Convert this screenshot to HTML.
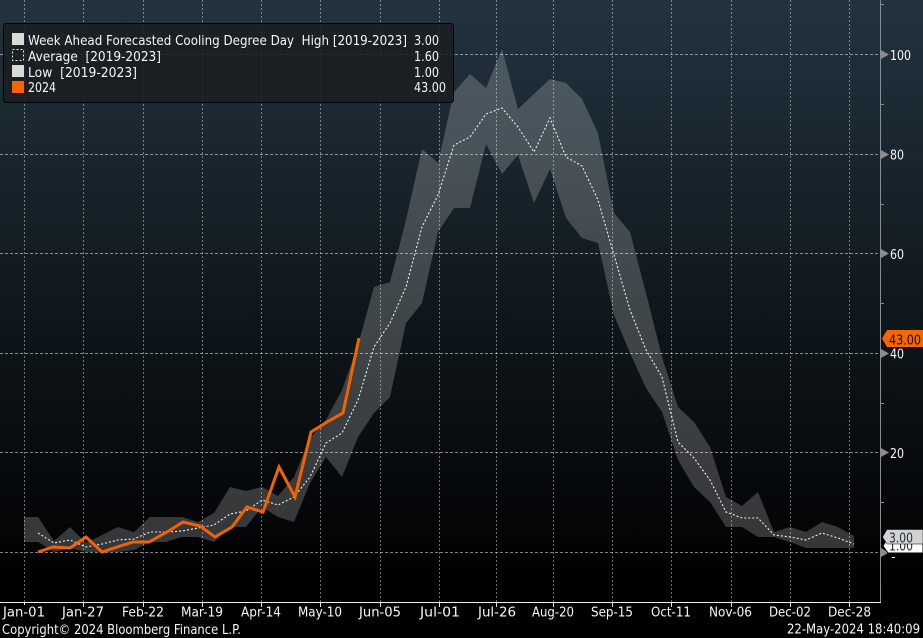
<!DOCTYPE html>
<html>
<head>
<meta charset="utf-8">
<style>
html,body{margin:0;padding:0;background:#000;width:923px;height:638px;overflow:hidden}
svg{display:block}
text{font-family:"DejaVu Sans","Liberation Sans",sans-serif;font-size:13.5px;fill:#f4f6fa;white-space:pre}
.g{stroke:#fff;stroke-opacity:.42;stroke-width:1;stroke-dasharray:2 2;fill:none;shape-rendering:crispEdges}
.h{stroke:#fff;stroke-opacity:.5;stroke-width:1;stroke-dasharray:3 2;fill:none;shape-rendering:crispEdges}
</style>
</head>
<body>
<svg width="923" height="638" viewBox="0 0 923 638" xmlns="http://www.w3.org/2000/svg">
<defs>
<linearGradient id="bg" x1="0" y1="0" x2="0" y2="1">
<stop offset="0" stop-color="#22333f"/>
<stop offset=".25" stop-color="#19262f"/>
<stop offset=".5" stop-color="#10181d"/>
<stop offset=".75" stop-color="#080c0f"/>
<stop offset=".95" stop-color="#010102"/>
<stop offset="1" stop-color="#000"/>
</linearGradient>
</defs>
<rect width="923" height="638" fill="#000"/>
<rect x="0" y="0" width="923" height="602" fill="url(#bg)"/>

<!-- band -->
<polygon fill="#fff" fill-opacity=".205" points="24,517 38,517 54,541 70,527 86,543 102,535 118,527 134,532 150,517 166,517 182,517 198,522 214,513 230,487 246,491 262,487 278,496 294,477 310,438 326,420 342,390 358,345 374,287 390,282 406,220 422,149 438,163 454,92 470,74 486,88 502,49 518,109 534,94 550,79 566,83 582,99 598,133 614,213 630,232 646,293 662,357 678,407 694,422 710,447 726,497 742,506 758,492 774,532 790,527 806,532 822,522 838,527 854,536 854,548 838,548 822,548 806,548 790,542 774,537 758,537 742,527 726,527 710,502 694,487 678,460 662,412 646,388 630,353 614,315 598,243 582,238 566,218 550,169 534,203 518,155 502,174 486,144 470,208 454,208 438,232 422,303 406,323 390,397 374,413 358,437 342,477 326,457 310,483 294,522 278,517 262,507 246,527 230,527 214,542 198,537 182,537 166,542 150,542 134,550 118,552 102,552 86,552 70,548 54,552 38,542 24,542"/>

<!-- grid -->
<g class="h">
<path d="M0 54.5H880"/><path d="M0 154.5H880"/><path d="M0 253.5H880"/><path d="M0 353.5H880"/><path d="M0 452.5H880"/><path d="M0 552.5H880"/>
</g>
<g class="g">
<path d="M24.5 0V602"/><path d="M83.5 0V602"/><path d="M143.5 0V602"/><path d="M202.5 0V602"/><path d="M261.5 0V602"/><path d="M320.5 0V602"/><path d="M380.5 0V602"/><path d="M439.5 0V602"/><path d="M496.5 0V602"/><path d="M553.5 0V602"/><path d="M612.5 0V602"/><path d="M671.5 0V602"/><path d="M731.5 0V602"/><path d="M790.5 0V602"/><path d="M849.5 0V602"/>
</g>

<!-- average -->
<polyline fill="none" stroke="#f2f2f2" stroke-width="1.1" stroke-dasharray="2 2" points="38,533 54,543 70,540 86,547 102,544 118,540 134,539 150,532 166,532 182,531 198,528 214,525 230,514 246,511 262,500 278,505 294,497 310,477 326,443 342,433 358,400 374,347 390,323 406,287 422,227 438,195 454,145 470,137 486,114 502,108 518,127 534,152 550,118 566,157 582,166 598,200 614,255 630,310 646,350 662,377 678,442 694,458 710,480 726,512 742,518 758,518 774,535 790,537 806,540 822,533 838,538 854,544"/>

<!-- 2024 -->
<polyline fill="none" stroke="#f26200" stroke-width="3" stroke-linejoin="miter" points="38,552 53,547 70,548 86,537 102,552 117,547 133,542 149,542 167,532 183,522 200,526 215,537 232,527 247,507 263,512 279,467 295,497 311,432 327,422 343,413 359,338"/>

<!-- legend -->
<rect x="3.5" y="23.5" width="450" height="79" rx="3" fill="#1a1e21" fill-opacity=".88" stroke="#000" stroke-width="1"/>
<rect x="12" y="33" width="12" height="12" fill="#d9d9d9"/>
<rect x="12.5" y="49.5" width="11" height="11" fill="none" stroke="#eee" stroke-dasharray="2 2"/>
<rect x="12" y="65" width="12" height="12" fill="#d9d9d9"/>
<rect x="12" y="81" width="12" height="12" fill="#f56600"/>
<text x="28" y="45" textLength="379" lengthAdjust="spacingAndGlyphs" xml:space="preserve">Week Ahead Forecasted Cooling Degree Day  High [2019-2023]</text>
<text x="28" y="61" textLength="133" lengthAdjust="spacingAndGlyphs" xml:space="preserve">Average  [2019-2023]</text>
<text x="28" y="77" textLength="109" lengthAdjust="spacingAndGlyphs" xml:space="preserve">Low  [2019-2023]</text>
<text x="28" y="92" textLength="28" lengthAdjust="spacingAndGlyphs">2024</text>
<text x="414" y="45" textLength="25" lengthAdjust="spacingAndGlyphs">3.00</text>
<text x="414" y="61" textLength="25" lengthAdjust="spacingAndGlyphs">1.60</text>
<text x="414" y="77" textLength="25" lengthAdjust="spacingAndGlyphs">1.00</text>
<text x="414" y="92" textLength="32" lengthAdjust="spacingAndGlyphs">43.00</text>

<!-- axes -->
<path d="M880.5 0V602" stroke="#8c8c8c" stroke-width="1" fill="none" shape-rendering="crispEdges"/>
<path d="M0 602.5H881" stroke="#f0f0f0" stroke-width="1" fill="none" shape-rendering="crispEdges"/>
<path d="M24.5 603V605M83.5 603V607M143.5 603V607M202.5 603V607M261.5 603V607M320.5 603V607M380.5 603V607M439.5 603V607M496.5 603V607M553.5 603V607M612.5 603V607M671.5 603V607M731.5 603V607M790.5 603V607M849.5 603V607" stroke="#e0e0e0" stroke-width="1" fill="none" shape-rendering="crispEdges"/>
<path d="M881 4.5H884M881 104.5H884M881 204.5H884M881 303.5H884M881 403.5H884M881 502.5H884" stroke="#8c8c8c" stroke-width="1" fill="none" shape-rendering="crispEdges"/>
<g fill="#8c8c8c">
<polygon points="881,50 889,54.5 881,59"/>
<polygon points="881,150 889,154.5 881,159"/>
<polygon points="881,249 889,253.5 881,258"/>
<polygon points="881,349 889,353.5 881,358"/>
<polygon points="881,448 889,452.5 881,457"/>
<polygon points="881,548 889,552.5 881,557"/>
</g>
<text x="890" y="60" textLength="21" lengthAdjust="spacingAndGlyphs">100</text>
<text x="890" y="159.5" textLength="14" lengthAdjust="spacingAndGlyphs">80</text>
<text x="890" y="259" textLength="14" lengthAdjust="spacingAndGlyphs">60</text>
<text x="890" y="358.5" textLength="14" lengthAdjust="spacingAndGlyphs">40</text>
<text x="890" y="458" textLength="14" lengthAdjust="spacingAndGlyphs">20</text>

<!-- value labels -->
<polygon points="882,338.5 887,330 923,330 923,347 887,347" fill="#f56600"/>
<text x="889" y="344.5" textLength="32" lengthAdjust="spacingAndGlyphs" style="fill:#1a0d00">43.00</text>

<polygon points="883,546 888,537 923,537 923,553 888,553" fill="#fff" stroke="#000" stroke-width="1"/>
<text x="889" y="550.5" textLength="24" lengthAdjust="spacingAndGlyphs" style="fill:#222">1.00</text>
<polygon points="882.5,537 887,529.5 923,529.5 923,544 887,544" fill="#d2d2d2" stroke="#000" stroke-width=".5"/>
<text x="889" y="542.5" textLength="24" lengthAdjust="spacingAndGlyphs" style="fill:#1c2a3a">3.00</text>
<path d="M892 557.5H895" stroke="#fff" fill="none" shape-rendering="crispEdges"/>

<!-- x labels -->
<text x="3" y="616.5" textLength="42" lengthAdjust="spacingAndGlyphs">Jan-01</text>
<text x="62" y="616.5" textLength="42" lengthAdjust="spacingAndGlyphs">Jan-27</text>
<text x="122" y="616.5" textLength="42" lengthAdjust="spacingAndGlyphs">Feb-22</text>
<text x="181" y="616.5" textLength="42" lengthAdjust="spacingAndGlyphs">Mar-19</text>
<text x="241" y="616.5" textLength="40" lengthAdjust="spacingAndGlyphs">Apr-14</text>
<text x="298" y="616.5" textLength="44" lengthAdjust="spacingAndGlyphs">May-10</text>
<text x="359" y="616.5" textLength="42" lengthAdjust="spacingAndGlyphs">Jun-05</text>
<text x="420" y="616.5" textLength="40" lengthAdjust="spacingAndGlyphs">Jul-01</text>
<text x="478" y="616.5" textLength="38" lengthAdjust="spacingAndGlyphs">Jul-26</text>
<text x="532" y="616.5" textLength="42" lengthAdjust="spacingAndGlyphs">Aug-20</text>
<text x="591" y="616.5" textLength="42" lengthAdjust="spacingAndGlyphs">Sep-15</text>
<text x="651" y="616.5" textLength="40" lengthAdjust="spacingAndGlyphs">Oct-11</text>
<text x="709" y="616.5" textLength="43" lengthAdjust="spacingAndGlyphs">Nov-06</text>
<text x="769" y="616.5" textLength="42" lengthAdjust="spacingAndGlyphs">Dec-02</text>
<text x="828" y="616.5" textLength="43" lengthAdjust="spacingAndGlyphs">Dec-28</text>

<text x="2" y="634" textLength="239" lengthAdjust="spacingAndGlyphs">Copyright© 2024 Bloomberg Finance L.P.</text>
<text x="787" y="633.5" textLength="133" lengthAdjust="spacingAndGlyphs">22-May-2024 18:40:09</text>
</svg>
</body>
</html>
